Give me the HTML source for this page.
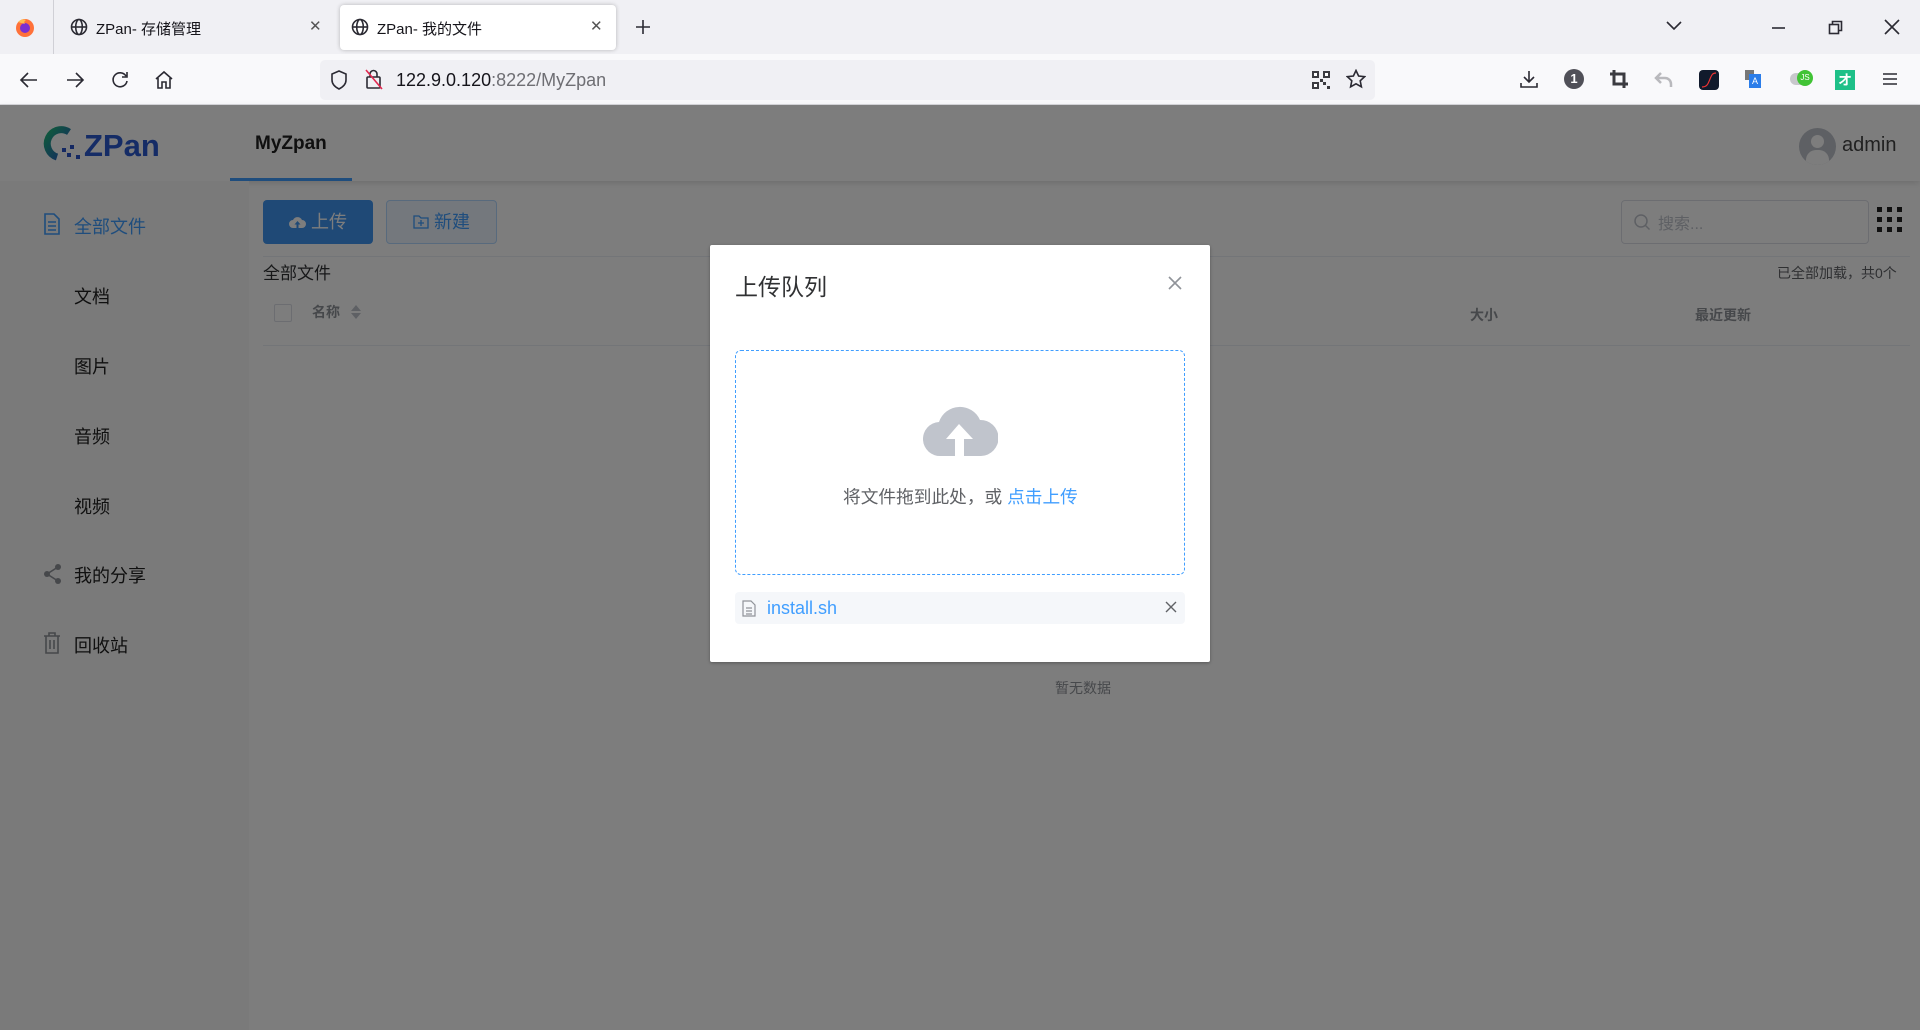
<!DOCTYPE html>
<html><head><meta charset="utf-8">
<style>
*{margin:0;padding:0;box-sizing:border-box}
body{width:1920px;height:1030px;overflow:hidden;font-family:"Liberation Sans","Noto Sans CJK SC",sans-serif;background:#fff;position:relative;color:#222}
.abs{position:absolute}
.tabbar{left:0;top:0;width:1920px;height:54px;background:#f0f0f4}
.toolbar{left:0;top:54px;width:1920px;height:51px;background:#f9f9fb;border-bottom:1px solid #d8d8dc}
.tabt{font-size:15px;color:#15141a;white-space:nowrap}
.ic{stroke:#2b2a33;fill:none;stroke-width:1.6}
.overlay{left:0;top:105px;width:1920px;height:925px;background:rgba(0,0,0,.51)}
</style></head><body>
<div class="abs tabbar"></div>
<svg class="abs" style="left:14px;top:16px" width="22" height="22" viewBox="0 0 22 22"><circle cx="11" cy="12" r="9" fill="#ff7139"/><circle cx="11" cy="12" r="5" fill="#7b2fd0"/><path d="M4 6 Q8 2 12 4 Q9 6 11 8" fill="#ffbd4f"/></svg>
<div class="abs" style="left:53px;top:0;width:1px;height:54px;background:#d0d0d6"></div>
<svg class="abs" style="left:70px;top:18px" width="18" height="18" viewBox="0 0 18 18"><g class="ic" stroke-width="1.4"><circle cx="9" cy="9" r="7.5"/><ellipse cx="9" cy="9" rx="3.3" ry="7.5"/><path d="M1.5 9h15"/></g></svg>
<div class="abs tabt" style="left:96px;top:18px">ZPan- 存储管理</div>
<div class="abs tabt" style="left:309px;top:17px;color:#555">✕</div>
<div class="abs" style="left:340px;top:5px;width:276px;height:45px;background:#fff;border-radius:4px;box-shadow:0 0 4px rgba(0,0,0,.25)"></div>
<svg class="abs" style="left:351px;top:18px" width="18" height="18" viewBox="0 0 18 18"><g class="ic" stroke-width="1.4"><circle cx="9" cy="9" r="7.5"/><ellipse cx="9" cy="9" rx="3.3" ry="7.5"/><path d="M1.5 9h15"/></g></svg>
<div class="abs tabt" style="left:377px;top:18px">ZPan- 我的文件</div>
<div class="abs tabt" style="left:590px;top:17px;color:#555">✕</div>
<svg class="abs" style="left:634px;top:18px" width="18" height="18"><path d="M9 2v14M2 9h14" class="ic"/></svg>
<svg class="abs" style="left:1666px;top:20px" width="16" height="12"><path d="M1 2l7 7 7-7" class="ic"/></svg>
<svg class="abs" style="left:1771px;top:20px" width="16" height="16"><path d="M1 8h13" class="ic" stroke-width="1.2"/></svg>
<svg class="abs" style="left:1828px;top:20px" width="16" height="16"><g class="ic" stroke-width="1.2"><rect x="1.5" y="4.5" width="9" height="9"/><path d="M4.5 4.5v-3h9v9h-3"/></g></svg>
<svg class="abs" style="left:1884px;top:19px" width="16" height="16"><path d="M1 1l14 14M15 1L1 15" class="ic" stroke-width="1.3"/></svg>
<div class="abs toolbar"></div>
<svg class="abs" style="left:19px;top:70px" width="20" height="20"><path d="M18 10H3M9 3l-7 7 7 7" class="ic"/></svg>
<svg class="abs" style="left:65px;top:70px" width="20" height="20"><path d="M2 10h15M11 3l7 7-7 7" class="ic" stroke="#b0b0b4"/></svg>
<svg class="abs" style="left:110px;top:70px" width="20" height="20"><path d="M16 6A7 7 0 1 0 17 11M17 2v5h-5" class="ic"/></svg>
<svg class="abs" style="left:154px;top:70px" width="20" height="20"><path d="M2 9l8-7 8 7M4 8v10h4v-6h4v6h4V8" class="ic"/></svg>
<div class="abs" style="left:320px;top:60px;width:1055px;height:40px;background:#f0f0f4;border-radius:5px"></div>
<svg class="abs" style="left:330px;top:70px" width="18" height="20"><path d="M9 1l7 3v6c0 4-3 7-7 9-4-2-7-5-7-9V4z" class="ic" stroke-width="1.4"/></svg>
<svg class="abs" style="left:364px;top:68px" width="20" height="22"><g class="ic" stroke-width="1.4"><rect x="3" y="9" width="13" height="11" rx="1"/><path d="M6 9V6a3.5 3.5 0 0 1 7 0v3"/></g><path d="M2 2l16 19" stroke="#e22850" stroke-width="1.6"/></svg>
<div class="abs" style="left:396px;top:70px;font-size:18px;color:#15141a">122.9.0.120<span style="color:#6e6e73">:8222/MyZpan</span></div>
<svg class="abs" style="left:1312px;top:71px" width="18" height="18"><g fill="#3b3b40"><rect x="0" y="0" width="7" height="7"/><rect x="11" y="0" width="7" height="7"/><rect x="0" y="11" width="7" height="7"/><rect x="11" y="11" width="3" height="3"/><rect x="15" y="15" width="3" height="3"/><rect x="8" y="8" width="3" height="3"/></g><g fill="#fff"><rect x="2" y="2" width="3" height="3"/><rect x="13" y="2" width="3" height="3"/><rect x="2" y="13" width="3" height="3"/></g></svg>
<svg class="abs" style="left:1346px;top:69px" width="20" height="20"><path d="M10 1.5l2.6 5.5 6 .7-4.4 4.1 1.2 6L10 14.8 4.6 17.8l1.2-6L1.4 7.7l6-.7z" class="ic" stroke-width="1.5"/></svg>
<svg class="abs" style="left:1519px;top:69px" width="20" height="20"><path d="M10 2v11M5 8l5 5 5-5M2 14v4h16v-4" class="ic" stroke-width="1.5"/></svg>
<div class="abs" style="left:1564px;top:69px;width:20px;height:20px;border-radius:50%;background:#505058;color:#fff;font-size:13px;font-weight:bold;text-align:center;line-height:20px">1</div>
<svg class="abs" style="left:1609px;top:69px" width="20" height="20"><path d="M5 1v14h14M1 5h14v14" fill="none" stroke="#3b3b40" stroke-width="3"/></svg>
<svg class="abs" style="left:1654px;top:70px" width="20" height="20"><path d="M7 3L2 8l5 5M2 8h9a6 6 0 0 1 6 6v3" fill="none" stroke="#b9b9bd" stroke-width="2.5"/></svg>
<div class="abs" style="left:1699px;top:70px;width:20px;height:20px;border-radius:4px;background:#111a2c"><svg width="20" height="20"><path d="M3 17c5 0 6-3 8-8s3-6 6-6" stroke="#e33" fill="none" stroke-width="1.2"/></svg></div>
<div class="abs" style="left:1745px;top:70px;width:9px;height:10px;background:#777"></div>
<div class="abs" style="left:1749px;top:74px;width:12px;height:14px;background:#2b7de9;color:#fff;font-size:9px;text-align:center;line-height:14px">A</div>
<div class="abs" style="left:1790px;top:73px;width:18px;height:12px;border-radius:6px;background:#c8c8cc"></div>
<div class="abs" style="left:1797px;top:70px;width:16px;height:16px;border-radius:50%;background:#41c335;color:#fff;font-size:8px;text-align:center;line-height:16px">JS</div>
<div class="abs" style="left:1835px;top:70px;width:20px;height:20px;background:#1ec088;color:#fff;font-size:14px;text-align:center;line-height:20px;font-weight:bold">オ</div>
<svg class="abs" style="left:1882px;top:71px" width="16" height="16"><path d="M1 3h14M1 8h14M1 13h14" class="ic" stroke-width="1.5"/></svg>

<div class="abs" style="left:0;top:105px;width:1920px;height:76px;background:#fff;box-shadow:0 2px 6px rgba(0,0,0,.12)"></div>
<svg class="abs" style="left:43px;top:124px" width="40" height="38" viewBox="0 0 40 38"><defs><linearGradient id="g" x1="0" y1="0" x2="1" y2="1"><stop offset="0" stop-color="#1fb87a"/><stop offset="1" stop-color="#2a52c9"/></linearGradient></defs><path d="M26 8A14 14 0 1 0 14 33" fill="none" stroke="url(#g)" stroke-width="7"/><rect x="19" y="24" width="4" height="4" fill="#2a52c9"/><rect x="24" y="29" width="4" height="4" fill="#2a52c9"/><rect x="27" y="21" width="4" height="4" fill="#2a52c9"/><rect x="33" y="31" width="4" height="4" fill="#2a52c9"/></svg>
<div class="abs" style="left:84px;top:128px;font-size:31px;font-weight:bold;color:#2c5ad0">ZPan</div>
<div class="abs" style="left:255px;top:133px;font-size:19px;font-weight:bold;color:#222">MyZpan</div>
<div class="abs" style="left:230px;top:178px;width:122px;height:3px;background:#409eff"></div>
<div class="abs" style="left:1799px;top:128px;width:37px;height:37px;border-radius:50%;background:#c0c4cc;overflow:hidden"><div class="abs" style="left:12px;top:7px;width:13px;height:13px;border-radius:50%;background:#fff"></div><div class="abs" style="left:7px;top:22px;width:23px;height:16px;border-radius:10px 10px 0 0;background:#fff"></div></div>
<div class="abs" style="left:1842px;top:134px;font-size:20px;color:#444">admin</div>
<div class="abs" style="left:0;top:181px;width:249px;height:849px;background:#f8f8f8"></div>
<svg class="abs" style="left:43px;top:213px" width="18" height="22"><g fill="none" stroke="#409eff" stroke-width="1.6"><path d="M2 1h9l5 5v15H2z"/><path d="M5 9h8M5 13h8M5 17h8"/></g></svg>
<div class="abs" style="left:74px;top:213px;font-size:18px;color:#409eff">全部文件</div>
<div class="abs" style="left:74px;top:283px;font-size:18px">文档</div>
<div class="abs" style="left:74px;top:353px;font-size:18px">图片</div>
<div class="abs" style="left:74px;top:423px;font-size:18px">音频</div>
<div class="abs" style="left:74px;top:493px;font-size:18px">视频</div>
<svg class="abs" style="left:43px;top:563px" width="20" height="22"><g fill="#909399"><circle cx="15" cy="4" r="3"/><circle cx="4" cy="11" r="3"/><circle cx="15" cy="18" r="3"/></g><path d="M15 4L4 11l11 7" stroke="#909399" stroke-width="1.6" fill="none"/></svg>
<div class="abs" style="left:74px;top:562px;font-size:18px">我的分享</div>
<svg class="abs" style="left:43px;top:632px" width="18" height="22"><g fill="none" stroke="#909399" stroke-width="1.6"><path d="M1 4h16M6 4V1h6v3M3 4v17h12V4M7 8v9M11 8v9"/></g></svg>
<div class="abs" style="left:74px;top:632px;font-size:18px">回收站</div>

<div class="abs" style="left:263px;top:200px;width:110px;height:44px;background:#3f95f0;border-radius:4px;color:#fff;font-size:18px;line-height:44px;text-align:center"><svg width="17" height="14" style="vertical-align:-1px"><path d="M4 13A4 4 0 0 1 4 5 A5 5 0 0 1 13 5 A4 4 0 0 1 13 13Z" fill="#fff"/><path d="M8.5 6L5.5 9.5h2v3.5h2V9.5h2z" fill="#3f95f0"/></svg> 上传</div>
<div class="abs" style="left:386px;top:200px;width:111px;height:44px;border:1px solid #b3d8ff;background:#ecf5ff;border-radius:4px;color:#409eff;font-size:18px;line-height:42px;text-align:center"><svg width="16" height="14" style="vertical-align:-1px"><path d="M1 1h5l2 2h7v10H1z M8 5v6M5 8h6" fill="none" stroke="#409eff" stroke-width="1.3"/></svg> 新建</div>
<div class="abs" style="left:1621px;top:200px;width:248px;height:44px;border:1px solid #dcdfe6;border-radius:4px"></div>
<svg class="abs" style="left:1633px;top:213px" width="18" height="18"><circle cx="8" cy="8" r="6" stroke="#c0c4cc" fill="none" stroke-width="1.5"/><path d="M12.5 12.5l4 4" stroke="#c0c4cc" stroke-width="1.5"/></svg>
<div class="abs" style="left:1658px;top:210px;font-size:16px;color:#c0c4cc">搜索...</div>
<svg class="abs" style="left:1877px;top:207px" width="25" height="25"><g fill="#222"><rect x="0" y="0" width="5" height="5"/><rect x="10" y="0" width="5" height="5"/><rect x="20" y="0" width="5" height="5"/><rect x="0" y="10" width="5" height="5"/><rect x="10" y="10" width="5" height="5"/><rect x="20" y="10" width="5" height="5"/><rect x="0" y="20" width="5" height="5"/><rect x="10" y="20" width="5" height="5"/><rect x="20" y="20" width="5" height="5"/></g></svg>
<div class="abs" style="left:263px;top:256px;width:1647px;height:1px;background:#ebeef5"></div>
<div class="abs" style="left:263px;top:259px;font-size:17px;color:#303133">全部文件</div>
<div class="abs" style="left:1777px;top:263px;font-size:14px;color:#606266">已全部加载，共0个</div>
<div class="abs" style="left:274px;top:304px;width:18px;height:18px;border:1px solid #dcdfe6;border-radius:2px;background:#fff"></div>
<div class="abs" style="left:312px;top:302px;font-size:14px;font-weight:bold;color:#909399">名称</div>
<svg class="abs" style="left:350px;top:304px" width="12" height="16"><path d="M1 7l5-6 5 6zM1 9l5 6 5-6z" fill="#c0c4cc"/></svg>
<div class="abs" style="left:1470px;top:305px;font-size:14px;font-weight:bold;color:#909399">大小</div>
<div class="abs" style="left:1695px;top:305px;font-size:14px;font-weight:bold;color:#909399">最近更新</div>
<div class="abs" style="left:263px;top:345px;width:1647px;height:1px;background:#ebeef5"></div>
<div class="abs" style="left:1055px;top:678px;font-size:14px;color:#909399">暂无数据</div>

<div class="abs overlay"></div>

<div class="abs" style="left:710px;top:245px;width:500px;height:417px;background:#fff;border-radius:2px;box-shadow:0 1px 3px rgba(0,0,0,.3)"></div>
<div class="abs" style="left:735px;top:268px;font-size:23px;color:#303133">上传队列</div>
<svg class="abs" style="left:1168px;top:276px" width="14" height="14"><path d="M1 1l12 12M13 1L1 13" stroke="#909399" stroke-width="1.6"/></svg>
<div class="abs" style="left:735px;top:350px;width:450px;height:225px;border:1px dashed #409eff;border-radius:6px"></div>
<svg class="abs" style="left:923px;top:400px" width="75" height="58" viewBox="0 0 75 58"><path d="M18 56A17 17 0 0 1 16 22 A22 22 0 0 1 57 20 A18 18 0 0 1 58 56Z" fill="#c0c4cc"/><path d="M36 24L23 39h9v19h9V39h9z" fill="#fff"/></svg>
<div class="abs" style="left:843px;top:483px;font-size:17.7px;color:#606266">将文件拖到此处，或 <span style="color:#409eff">点击上传</span></div>
<div class="abs" style="left:735px;top:592px;width:450px;height:32px;background:#f5f7fa;border-radius:4px"></div>
<svg class="abs" style="left:742px;top:600px" width="14" height="17"><g fill="none" stroke="#909399" stroke-width="1.2"><path d="M1 1h8l4 4v11H1z"/><path d="M4 8h6M4 11h6M4 14h6"/></g></svg>
<div class="abs" style="left:767px;top:598px;font-size:18px;color:#409eff">install.sh</div>
<svg class="abs" style="left:1165px;top:601px" width="12" height="12"><path d="M1 1l10 10M11 1L1 11" stroke="#606266" stroke-width="1.4"/></svg>
</body></html>
